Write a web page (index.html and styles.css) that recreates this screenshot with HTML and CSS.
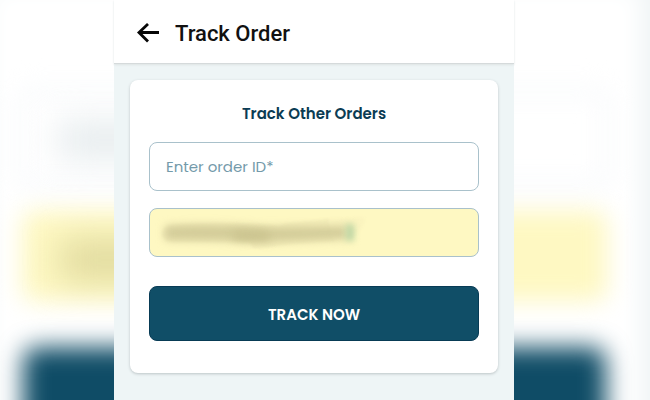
FILE: index.html
```
<!DOCTYPE html>
<html lang="en">
<head>
<meta charset="utf-8">
<meta name="viewport" content="width=device-width, initial-scale=1">
<title>Track Order</title>
<link rel="stylesheet" href="styles.css">
</head>
<body>
<div class="backdrop" aria-hidden="true">
  <svg viewBox="0 0 650 400" preserveAspectRatio="none">
    <defs>
      <filter id="soft" x="-20%" y="-60%" width="140%" height="220%" color-interpolation-filters="sRGB"><feGaussianBlur stdDeviation="12"/></filter>
      <filter id="softer" x="-60%" y="-200%" width="220%" height="500%" color-interpolation-filters="sRGB"><feGaussianBlur stdDeviation="17"/></filter>
    </defs>
    <rect width="650" height="400" fill="#eff4f5"/>
    <rect x="-12" y="-14" width="654" height="480" fill="#ffffff" filter="url(#soft)"/>
    <rect x="20" y="92" width="588" height="94" rx="14" fill="none" stroke="#f7f9fb" stroke-width="9" filter="url(#soft)"/>
    <rect x="58" y="122" width="120" height="36" fill="#e5ebed" filter="url(#softer)"/>
    <rect x="22" y="211" width="585" height="90" rx="12" fill="#fef8c2" filter="url(#soft)"/>
    <rect x="60" y="240" width="150" height="40" fill="#dfd99d" filter="url(#softer)"/>
    <rect x="23" y="347" width="583" height="110" rx="14" fill="#0f4c66" filter="url(#soft)"/>
  </svg>
</div>
<div class="stage">
  <div class="screen">
    <header class="topbar">
      <button class="back" type="button" aria-label="Back">
        <svg viewBox="0 0 24 22" width="24" height="22"><path d="M23 9.5H3M12 1L3 9.5L12 18.5" fill="none" stroke="#060606" stroke-width="2.8"/></svg>
      </button>
      <h1>Track Order</h1>
    </header>
    <main>
      <form class="card">
        <h2>Track Other Orders</h2>
        <input class="field" type="text" aria-label="Order ID" placeholder="Enter order ID*">
        <div class="masked">
          <input class="field filled" type="email" aria-label="Email">
          <svg class="smudge" viewBox="0 0 220 48" width="220" height="48" aria-hidden="true">
            <defs>
              <filter id="edge" color-interpolation-filters="sRGB"><feGaussianBlur stdDeviation="1"/></filter>
              <filter id="core" x="-20%" y="-150%" width="140%" height="400%" color-interpolation-filters="sRGB"><feGaussianBlur stdDeviation="4"/></filter>
              <filter id="caret" x="-200%" y="-100%" width="500%" height="300%" color-interpolation-filters="sRGB"><feGaussianBlur stdDeviation="3"/></filter>
            </defs>
            <path d="M13 26Q13 19 22 17Q70 13 130 18L138 15L180 11L186 33L140 36Q112 41 104 40L101 34H24Q13 33 13 26Z" fill="#f6efba" filter="url(#edge)"/>
            <path d="M180 12L208 9Q216 8 216 12Q216 20 202 29L186 33Z" fill="#fbf4bf" filter="url(#edge)"/>
            <path d="M16 18Q60 15 118 19L198 18V31L118 34Q60 32 16 32Z" fill="#d3cc99" filter="url(#core)"/>
            <path d="M84 23Q100 22 120 24V32Q100 34 84 31Z" fill="#cbc48f" filter="url(#core)"/>
            <path d="M197 16H205V33H197Z" fill="#bdd6a4" filter="url(#caret)"/>
          </svg>
        </div>
        <button class="submit" type="button">TRACK NOW</button>
      </form>
    </main>
  </div>
</div>
</body>
</html>
```
FILE: styles.css
```
* {
  box-sizing: border-box;
}

body {
  margin: 0;
  background: #ffffff;
  font-family: Poppins, Inter, sans-serif;
}

.backdrop {
  position: absolute;
  inset: 0;
  overflow: hidden;
}

.backdrop svg {
  display: block;
  width: 100%;
  height: 100%;
}

.stage {
  position: relative;
  display: grid;
  grid-template-columns: 114fr 400fr 136fr;
  min-height: 100vh;
}

.screen {
  grid-column: 2;
  display: flex;
  flex-direction: column;
  background: #eef5f6;
}

.topbar {
  display: flex;
  align-items: center;
  gap: 15px;
  height: 64px;
  padding: 4px 22px 0;
  background: #ffffff;
  border-bottom: 1px solid #d5dadb;
  box-shadow: 0 1px 2px #dde3e4;
}

.back {
  display: flex;
  padding: 0;
  border: 0;
  background: none;
}

h1 {
  margin: 0;
  color: #111111;
  font: 500 22px/32px Roboto, sans-serif;
}

main {
  padding: 16px;
}

.card {
  display: flex;
  flex-direction: column;
  padding: 20px 19px 32px;
  border-radius: 8px;
  background: #ffffff;
  box-shadow: 0 1px 3px #bcc4c6;
}

h2 {
  margin: 0 0 14px;
  color: #0b3c54;
  font-size: 15px;
  font-weight: 600;
  line-height: 28px;
  text-align: center;
}

.field {
  display: block;
  width: 100%;
  height: 49px;
  padding: 0 16px;
  border: 1px solid #a9c1cb;
  border-radius: 8px;
  background: #ffffff;
  color: #0b3c54;
  font: 400 15px/24px Poppins, Inter, sans-serif;
}

.field::placeholder {
  color: #749aaa;
  opacity: 1;
}

.masked {
  position: relative;
  margin: 17px 0 29px;
}

.filled {
  background: #fef8c2;
}

.smudge {
  position: absolute;
  top: 0;
  left: 0;
  pointer-events: none;
}

.submit {
  height: 55px;
  padding: 2px 0 0;
  border: 1px solid #083b55;
  border-radius: 8px;
  background: #104e67;
  color: #ffffff;
  font: 600 15px/24px Poppins, Inter, sans-serif;
}
```
